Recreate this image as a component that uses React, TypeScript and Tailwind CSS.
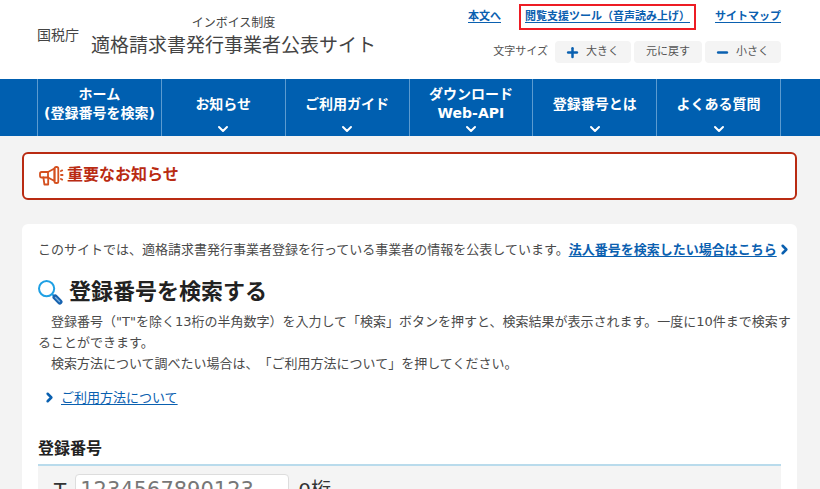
import { ReactNode } from "react";
import { ChevronDown, ChevronRight, Minus, Plus } from "lucide-react";

// ── Data ──────────────────────────────────────────────────────────────────────

interface NavItem {
  lines:    string[];
  hasMenu?: boolean;
}

const NAV_ITEMS: NavItem[] = [
  { lines: ["ホーム", "(登録番号を検索)"] },
  { lines: ["お知らせ"], hasMenu: true },
  { lines: ["ご利用ガイド"], hasMenu: true },
  { lines: ["ダウンロード", "Web-API"], hasMenu: true },
  { lines: ["登録番号とは"], hasMenu: true },
  { lines: ["よくある質問"], hasMenu: true },
];

// Strings keep their leading full-width space as the paragraph indent
const GUIDE = [
  "　登録番号（\"T\"を除く13桁の半角数字）を入力して「検索」ボタンを押すと、検索結果が表示されます。一度に10件まで検索することができます。",
  "　検索方法について調べたい場合は、「ご利用方法について」を押してください。",
];

// ── Icons ─────────────────────────────────────────────────────────────────────

function MegaphoneIcon() {
  return (
    <svg viewBox="0 0 26 20" className="w-[26px] h-5 shrink-0" fill="none" stroke="#d4501f" strokeWidth="1.8" strokeLinejoin="round" strokeLinecap="round" aria-hidden="true">
      <path d="M9 6H2.6Q1 6 1 7.8V9.7Q1 11.5 2.6 11.5H9Z" />
      <path d="M9 6 15.5 2.5V15L9 11.5" />
      <rect x="15.5" y="1" width="3.8" height="16" rx="1.6" />
      <path d="M4.4 11.5 5.4 18.5H9.2V11.5" />
      <path d="M21.9 5 23.2 4.4M22 9H23.6M21.9 13 23.2 13.6" />
    </svg>
  );
}

function SearchIcon() {
  return (
    <svg viewBox="0 0 25 25" className="w-[25px] h-[25px] shrink-0" fill="none" aria-hidden="true">
      <circle cx="8.6" cy="8.6" r="7.6" stroke="#1fa0e4" strokeWidth="2" />
      <path d="M14 14 17 17" stroke="#1fa0e4" strokeWidth="2" />
      <path d="M17.2 17.2 21.8 21.8" stroke="#1763b0" strokeWidth="5.4" strokeLinecap="round" />
      <path d="M17.5 17.5 21.5 21.5" stroke="#7fb2de" strokeWidth="1.4" strokeLinecap="round" />
    </svg>
  );
}

// ── Header parts ──────────────────────────────────────────────────────────────

function SizeButton({ children }: { children: ReactNode }) {
  return (
    <button type="button" className="flex h-[22px] items-center gap-2 rounded bg-[#f4f4f4] px-3 text-[11px] text-[#555]">
      {children}
    </button>
  );
}

function Header() {
  return (
    <header className="flex justify-between bg-white pl-[37px] pr-[39px] pb-4 pt-2">
      <div className="flex gap-3 pt-2 text-[#444]">
        <span className="pt-[9px] text-sm leading-5">国税庁</span>
        <h1 className="flex flex-col items-center">
          <span className="text-xs leading-[14px]">インボイス制度</span>
          <span className="text-[19px] leading-[30px]">適格請求書発行事業者公表サイト</span>
        </h1>
      </div>

      <div className="flex flex-col items-end">
        <div className="flex items-center text-[11px] font-bold text-[#0a60b0] leading-4">
          <a href="#main" className="underline underline-offset-2">本文へ</a>
          <span className="-my-1 ml-[18px] mr-[19px] border-2 border-[#ed1c24] px-1 py-[3px]">
            <a href="#reader" className="underline underline-offset-2">閲覧支援ツール（音声読み上げ）</a>
          </span>
          <a href="#sitemap" className="underline underline-offset-2">サイトマップ</a>
        </div>
        <div className="mt-[15px] flex items-center gap-[3px]">
          <span className="mr-1 text-[11px] text-[#555]">文字サイズ</span>
          <SizeButton><Plus size={15} strokeWidth={4} className="-mx-[2px] text-[#0a60b0]" />大きく</SizeButton>
          <SizeButton>元に戻す</SizeButton>
          <SizeButton><Minus size={15} strokeWidth={4} className="-mx-[2px] text-[#0a60b0]" />小さく</SizeButton>
        </div>
      </div>
    </header>
  );
}

function GlobalNav() {
  return (
    <nav className="bg-[#005fb0] pl-[37px] pr-[39px]">
      <ul className="grid grid-cols-6 border-l border-[#5c9bd0]">
        {NAV_ITEMS.map(item => (
          <li key={item.lines[0]} className="border-r border-[#5c9bd0]">
            <a href="#nav" className="flex h-[57px] flex-col items-center pt-1 text-sm font-bold leading-[19px] text-white">
              <span className="flex flex-1 flex-col items-center justify-center whitespace-nowrap">
                {item.lines.map(line => <span key={line}>{line}</span>)}
              </span>
              <span className="flex h-2 mb-[3px] items-center">
                {item.hasMenu && <ChevronDown size={16} strokeWidth={3} />}
              </span>
            </a>
          </li>
        ))}
      </ul>
    </nav>
  );
}

// ── Page ──────────────────────────────────────────────────────────────────────

export default function App() {
  return (
    <div className="h-screen overflow-hidden bg-[#f3f3f3] font-['DejaVu_Sans','Noto_Sans_CJK_JP',sans-serif] [text-spacing-trim:space-all]" lang="ja">
      <Header />
      <GlobalNav />

      <main id="main" className="pl-[22px] pr-[23px] pt-4">
        <section className="flex h-12 items-center gap-[2px] rounded-md border-2 border-[#b92b12] bg-white px-[15px]">
          <MegaphoneIcon />
          <h2 className="pb-[2px] text-base font-bold text-[#b92b12] leading-6">重要なお知らせ</h2>
        </section>

        <section className="mt-6 rounded-t-md bg-white px-4 pt-[15px] text-[13px] leading-[21px] text-[#4a4a4a]">
          <div className="-mr-2 flex items-center justify-between whitespace-nowrap">
            <p>このサイトでは、適格請求書発行事業者登録を行っている事業者の情報を公表しています。</p>
            <a href="#houjin" className="flex items-center font-bold text-[#0a60b0]">
              <span className="underline underline-offset-2">法人番号を検索したい場合はこちら</span>
              <ChevronRight size={15} strokeWidth={4} />
            </a>
          </div>

          <h2 className="mt-4 flex items-center gap-[6px] text-[22px] font-bold leading-8 text-[#222]">
            <SearchIcon />
            登録番号を検索する
          </h2>

          <div className="-mr-3 mt-[3px]">
            {GUIDE.map(text => <p key={text}>{text}</p>)}
          </div>

          <a href="#usage" className="mt-[13px] ml-1 inline-flex items-center gap-1 text-[#0a60b0]">
            <ChevronRight size={15} strokeWidth={4} />
            <span className="underline underline-offset-2">ご利用方法について</span>
          </a>

          <div className="mt-[26px] border-b-2 border-[#b9dbec] pb-[3px]">
            <label htmlFor="number" className="text-base font-bold leading-6 text-[#222]">登録番号</label>
          </div>
          <div className="flex items-center gap-[9px] bg-[#f4f4f4] px-4 pt-2 text-xl leading-7 text-[#333]">
            <span>T</span>
            <input
              id="number"
              type="text"
              placeholder="1234567890123"
              className="h-8 w-[214px] rounded border border-[#ddd] bg-white px-1 text-[21px] placeholder:text-[#777]"
            />
            <span>0桁</span>
          </div>
        </section>
      </main>
    </div>
  );
}
